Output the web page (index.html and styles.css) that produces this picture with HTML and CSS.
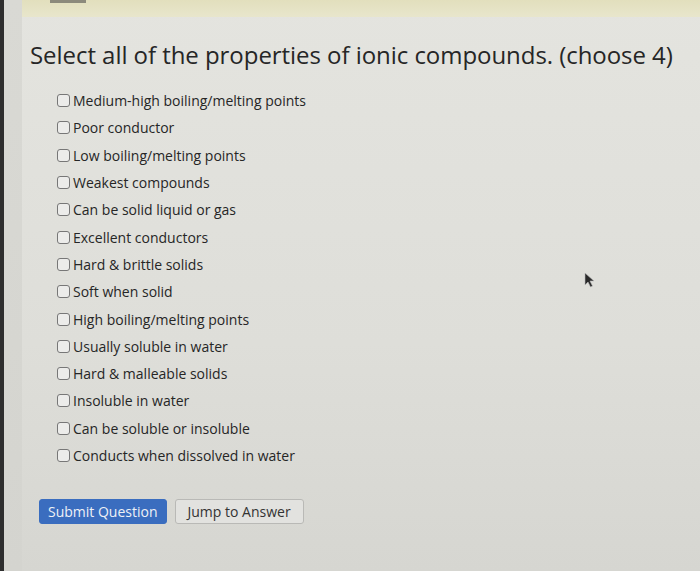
FILE: index.html
```html
<!DOCTYPE html>
<html lang="en">

<head>
    <meta charset="UTF-8">
    <meta name="viewport" content="width=device-width, initial-scale=1.0">
    <title>Question</title>
    <link rel="stylesheet" href="styles.css">
</head>

<body>
    <div class="frame">
        <div class="gutter"></div>
        <div class="page">
            <!-- top banner -->
            <div class="banner"><span class="tab"></span></div>

            <div class="question">
                <h1>Select all of the properties of ionic compounds. (choose 4)</h1>

                <ul class="choices">
                    <li><span class="box"></span>Medium-high boiling/melting points</li>
                    <li><span class="box"></span>Poor conductor</li>
                    <li><span class="box"></span>Low boiling/melting points</li>
                    <li><span class="box"></span>Weakest compounds</li>
                    <li><span class="box"></span>Can be solid liquid or gas</li>
                    <li><span class="box"></span>Excellent conductors</li>
                    <li><span class="box"></span>Hard &amp; brittle solids</li>
                    <li><span class="box"></span>Soft when solid</li>
                    <li><span class="box"></span>High boiling/melting points</li>
                    <li><span class="box"></span>Usually soluble in water</li>
                    <li><span class="box"></span>Hard &amp; malleable solids</li>
                    <li><span class="box"></span>Insoluble in water</li>
                    <li><span class="box"></span>Can be soluble or insoluble</li>
                    <li><span class="box"></span>Conducts when dissolved in water</li>
                </ul>

                <div class="actions">
                    <button class="btn primary">Submit Question</button>
                    <button class="btn">Jump to Answer</button>
                </div>
            </div>

            <!-- mouse pointer -->
            <svg class="cursor" width="12" height="16" viewBox="0 0 12 16">
                <path d="M1 1 L1 13 L4 10 L6.5 15 L8.5 14 L6 9 L10 9 Z" fill="#2a2a2a" stroke="#bbb" stroke-width="0.6" />
            </svg>
        </div>
    </div>
</body>

</html>
```

FILE: styles.css
```css
* {
    margin: 0;
    padding: 0;
    box-sizing: border-box;
}

body {
    background: #dcdcd6;
    font-family: "Open Sans", "DejaVu Sans", sans-serif;
    color: #2b2b2b;
    width: 700px;
    height: 571px;
    overflow: hidden;
}

.frame {
    display: flex;
    height: 571px;
    border-left: 4px solid #2e2e2e;
}

.gutter {
    width: 18px;
    background: linear-gradient(180deg, #d9d9d4, #d4d4cf);
}

.page {
    flex: 1;
    position: relative;
    background: linear-gradient(180deg, #e4e4df 0%, #dedeD9 60%, #d6d6d1 100%);
}

/* Banner */
.banner {
    height: 17px;
    background: linear-gradient(180deg, #e2dfbd, #e8e6cc);
}

.tab {
    display: block;
    margin-left: 28px;
    width: 36px;
    height: 3px;
    background: #8c8a7c;
}

/* Question */
.question {
    padding: 21px 0 0 8px;
}

h1 {
    font-size: 24px;
    font-weight: 400;
    color: #262626;
    letter-spacing: -0.05px;
    margin-bottom: 16px;
}

.choices {
    list-style: none;
    padding-left: 27px;
}

.choices li {
    display: flex;
    align-items: center;
    height: 27.3px;
    font-size: 14px;
    color: #262626;
}

.box {
    width: 13px;
    height: 13px;
    border: 1.5px solid #777;
    border-radius: 3px;
    background: #ececea;
    margin-right: 3px;
    flex-shrink: 0;
}

/* Buttons */
.actions {
    display: flex;
    gap: 8px;
    margin-top: 30px;
    padding-left: 9px;
}

.btn {
    font-family: "Open Sans", "DejaVu Sans", sans-serif;
    font-size: 14px;
    height: 25px;
    padding: 0 12px;
    border-radius: 3px;
    border: 1px solid #b9b9b6;
    background: #e2e2df;
    color: #333;
}

.btn.primary {
    padding: 0 8px;
    background: #3a6dbf;
    border-color: #3a6dbf;
    color: #eef1f6;
}

.cursor {
    position: absolute;
    left: 562px;
    top: 272px;
}
```
